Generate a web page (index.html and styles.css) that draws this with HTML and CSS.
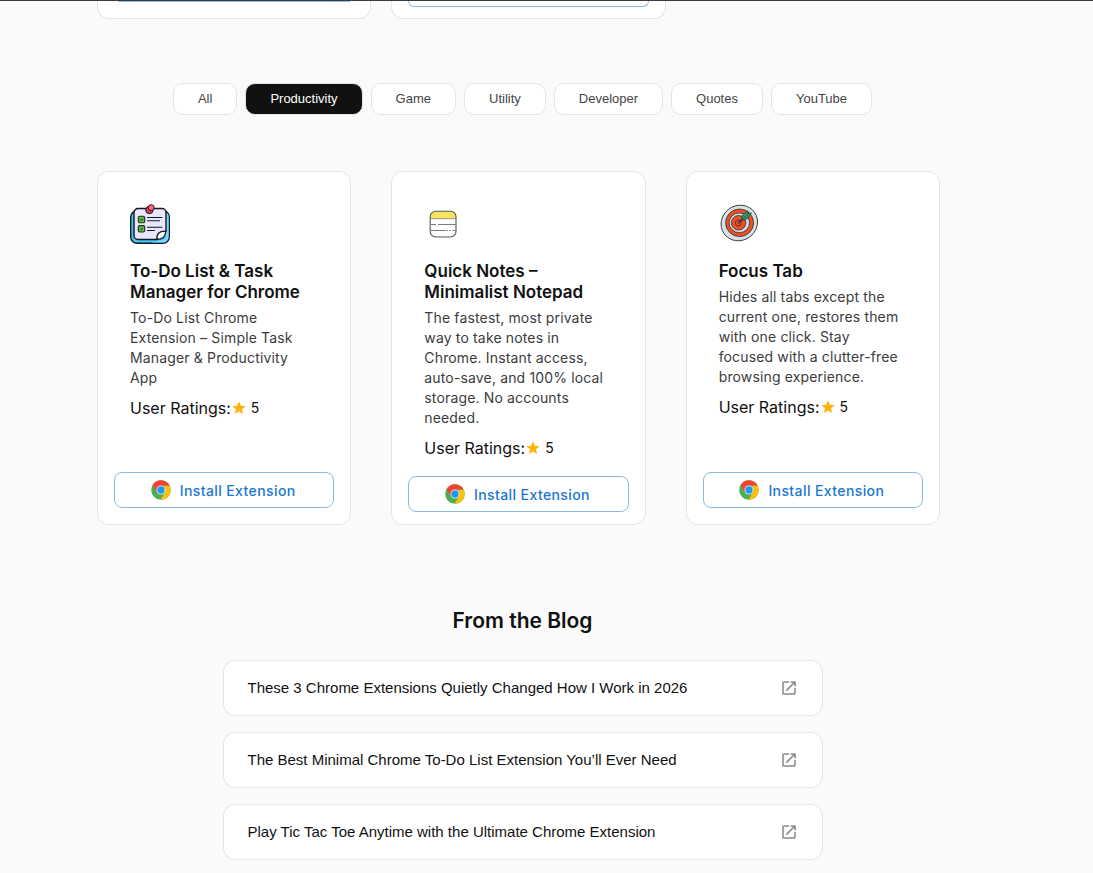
FILE: index.html
```html
<!DOCTYPE html>
<html lang="en">
<head>
<meta charset="utf-8">
<meta name="viewport" content="width=device-width, initial-scale=1">
<title>Chrome Extensions</title>
<link rel="stylesheet" href="styles.css">
</head>
<body>
<svg class="sprite" aria-hidden="true">
  <symbol id="chrome" viewBox="0 0 48 48">
    <circle cx="24" cy="24" r="23.500" fill="#4caf50"/>
    <path d="M44.400 13.400A23.500 23.500 0 0 1 23 47.500l10.500-18L32 13.400z" fill="#ffc107"/>
    <path d="M3.700 12.200A23.500 23.500 0 0 1 44.600 13.400H24L14 29.500z" fill="#f44336"/>
    <circle cx="24" cy="24" r="10.800" fill="#e3f2fd"/>
    <circle cx="24" cy="24" r="8.800" fill="#2196f3"/>
  </symbol>
  <symbol id="star" viewBox="0 0 24 24">
    <path d="M12 17.270 18.180 21l-1.640-7.030L22 9.240l-7.190-.61L12 2 9.190 8.630 2 9.240l5.460 4.730L5.820 21z" fill="#fbb40f"/>
  </symbol>
  <symbol id="open" viewBox="0 0 24 24">
    <path d="M19 19H5V5h7V3H5a2 2 0 0 0-2 2v14a2 2 0 0 0 2 2h14c1.100 0 2-.9 2-2v-7h-2v7zM14 3v2h3.590l-9.830 9.830 1.410 1.410L19 6.410V10h2V3h-7z" fill="currentColor"/>
  </symbol>
</svg>
<main class="page">
  <div class="grid">
    <div class="stub"><div class="stub__edge stub__edge--flat"></div></div>
    <div class="stub"><div class="stub__edge"></div></div>
  </div>

  <nav class="filters" aria-label="Categories">
    <button class="chip" type="button">All</button>
    <button class="chip chip--active" type="button" aria-pressed="true">Productivity</button>
    <button class="chip" type="button">Game</button>
    <button class="chip" type="button">Utility</button>
    <button class="chip" type="button">Developer</button>
    <button class="chip" type="button">Quotes</button>
    <button class="chip" type="button">YouTube</button>
  </nav>

  <section class="grid" aria-label="Extensions">
    <article class="card">
      <div class="card__body">
        <svg class="card__icon" viewBox="0 0 40 40" aria-hidden="true">
          <rect x=".7" y="6.500" width="38.600" height="32.800" rx="6.500" fill="#45c5f5" stroke="#101820" stroke-width="1.400"/>
          <path d="M21 38.600h12a5.600 5.600 0 0 0 5.600-5.600V13a5.600 5.600 0 0 0-3-5V35z" fill="#7cd6ff"/>
          <path d="M8 4.500h24a4 4 0 0 1 4 4V27l-8.500 8.500H8a4 4 0 0 1-4-4v-23a4 4 0 0 1 4-4z" fill="#e9e6fc" stroke="#101820" stroke-width="1.400"/>
          <path d="M27 35.400c-.8-5 2.200-8.600 8.800-8.200-.3 5-3.600 8.200-8.800 8.200z" fill="#fff" stroke="#101820" stroke-width="1.300"/>
          <g fill="#68b83c" stroke="#16301c" stroke-width="1.100"><rect x="8.300" y="12.300" width="6.400" height="6.400" rx="1.400"/><rect x="8.300" y="21.600" width="6.400" height="6.400" rx="1.400"/></g>
          <path d="M10.300 15.500l.9.900 1.700-1.700M10.300 24.900l.9.900 1.700-1.700" fill="none" stroke="#101820" stroke-width=".9"/>
          <path d="M17.500 13.500H32M17.500 16.700H29.500M17.500 23.200H32M17.500 26.500H24.500" fill="none" stroke="#101820" stroke-width="1.100" stroke-linecap="round"/>
          <circle cx="19.400" cy="6" r="3.700" fill="#e13b57" stroke="#101820"/>
          <circle cx="21.200" cy="3.700" r="3" fill="#ff6680" stroke="#32131b"/>
        </svg>
        <h2 class="card__title">To-Do List &amp; Task Manager for Chrome</h2>
        <p class="card__text">To-Do List Chrome Extension – Simple Task Manager &amp; Productivity App</p>
        <p class="rating">User Ratings:<svg class="rating__star" aria-hidden="true"><use href="#star"/></svg><span class="rating__value">5</span></p>
      </div>
      <a class="install" href="#"><svg class="install__logo" aria-hidden="true"><use href="#chrome"/></svg>Install Extension</a>
    </article>

    <article class="card card--tall">
      <div class="card__body">
        <svg class="card__icon" viewBox="0 0 40 40" aria-hidden="true">
          <path d="M6.500 14.500V12.500a5 5 0 0 1 5-5h16a5 5 0 0 1 5 5v2z" fill="#fbe35a"/>
          <rect x="6.200" y="7.200" width="25.800" height="25.800" rx="5.500" fill="none" stroke="#55565f" stroke-width="1.100"/>
          <path d="M6.500 14.600h25.500" stroke="#777" stroke-width="1.100" stroke-dasharray="1.200 .8"/>
          <path d="M6.500 20.500h5.500m2 0h18M6.500 26.500h15m1 0h1.500m1 0h1.500m2 0h3.500" stroke="#7c7d84" stroke-width="1"/>
        </svg>
        <h2 class="card__title">Quick Notes – Minimalist Notepad</h2>
        <p class="card__text">The fastest, most private way to take notes in Chrome. Instant access, auto-save, and 100% local storage. No accounts needed.</p>
        <p class="rating">User Ratings:<svg class="rating__star" aria-hidden="true"><use href="#star"/></svg><span class="rating__value">5</span></p>
      </div>
      <a class="install" href="#"><svg class="install__logo" aria-hidden="true"><use href="#chrome"/></svg>Install Extension</a>
    </article>

    <article class="card">
      <div class="card__body">
        <svg class="card__icon" viewBox="0 0 40 40" aria-hidden="true">
          <g stroke="#3d3b3c" stroke-width=".9">
            <ellipse cx="20.300" cy="19" rx="18.600" ry="17.400" fill="#d5e3e6" transform="rotate(-35 20.300 19)"/>
            <ellipse cx="20.600" cy="18.800" rx="14" ry="13.800" fill="#f04d25"/>
            <ellipse cx="20.300" cy="18.800" rx="10.200" ry="9.900" fill="#d5e3e6"/>
            <circle cx="19.600" cy="18.800" r="7.300" fill="#f04d25"/>
            <circle cx="19.200" cy="19" r="2.900" fill="#f04d25"/>
          </g>
          <path d="M19 19.400l8-8" stroke="#1e2b28" stroke-width="1.200"/>
          <path d="M22.800 16l.4-4.500 5.600-4.700.2 2.800 3.400-.6-4 5.600-5 1.600z" fill="#27a277" stroke="#1d3b31" stroke-width=".8"/>
          <path d="M23 15.800l6.500-6.300" stroke="#1d3b31" stroke-width=".7"/>
        </svg>
        <h2 class="card__title">Focus Tab</h2>
        <p class="card__text">Hides all tabs except the current one, restores them with one click. Stay focused with a clutter-free browsing experience.</p>
        <p class="rating">User Ratings:<svg class="rating__star" aria-hidden="true"><use href="#star"/></svg><span class="rating__value">5</span></p>
      </div>
      <a class="install" href="#"><svg class="install__logo" aria-hidden="true"><use href="#chrome"/></svg>Install Extension</a>
    </article>
  </section>

  <section class="blog">
    <h2 class="blog__title">From the Blog</h2>
    <a class="post" href="#">These 3 Chrome Extensions Quietly Changed How I Work in 2026<svg class="post__icon" aria-hidden="true"><use href="#open"/></svg></a>
    <a class="post" href="#">The Best Minimal Chrome To-Do List Extension You’ll Ever Need<svg class="post__icon" aria-hidden="true"><use href="#open"/></svg></a>
    <a class="post" href="#">Play Tic Tac Toe Anytime with the Ultimate Chrome Extension<svg class="post__icon" aria-hidden="true"><use href="#open"/></svg></a>
  </section>
</main>
</body>
</html>
```
FILE: styles.css
```css
* {
  box-sizing: border-box;
}

body {
  margin: 0;
  border-top: 1px solid #3c3c3e;
  background: #fafafa;
  color: #111;
  font-family: "Liberation Sans", Arial, sans-serif;
}

.sprite {
  display: none;
}

.page {
  padding: 0 48px 12px 0;
}

.grid {
  display: grid;
  grid-template-columns: repeat(3, 1fr);
  gap: 20px;
  margin: 0 85px 0 97px;
}

/* Lower edges of the row that is scrolled away. */
.stub {
  height: 18px;
  padding: 0 16px;
  border: 1px solid #e5e5e5;
  border-top: 0;
  border-radius: 0 0 12px 12px;
  background: #fff;
}

.stub__edge {
  height: 6px;
  border: 1px solid #8cbae8;
  border-top: 0;
  border-radius: 0 0 8px 8px;
}

.stub__edge--flat {
  height: 1px;
  margin: 0 4px;
  border-width: 0 0 1px;
  border-radius: 0;
}

.card {
  display: flex;
  flex-direction: column;
  justify-content: space-between;
  margin-right: 20px;
  padding: 16px;
  border: 1px solid #e5e5e5;
  border-radius: 12px;
  background: #fff;
}

.card--tall {
  padding-bottom: 12px;
}

.card__body {
  padding: 16px 16px 18px;
  font-family: Inter, sans-serif;
}

.card__icon {
  display: block;
  width: 40px;
  height: 40px;
}

.card__title {
  margin: 17px 0 5px;
  font-size: 17px;
  font-weight: 600;
  line-height: 21px;
}

.card__text {
  margin: 0 0 10px;
  color: #3c3c3c;
  font-size: 14px;
  letter-spacing: 0.01071em;
  line-height: 20px;
}

.rating {
  display: flex;
  align-items: center;
  margin: 0;
  font-size: 16px;
  line-height: 20px;
}

.rating__star {
  width: 16px;
  height: 16px;
}

.rating__value {
  margin-left: 4px;
  font-size: 14px;
}

.install {
  display: flex;
  flex-shrink: 0;
  align-items: center;
  justify-content: center;
  gap: 9px;
  height: 36px;
  padding-right: 2px;
  border: 1px solid #8cbae8;
  border-radius: 8px;
  color: #1976d2;
  font-family: Inter, sans-serif;
  font-size: 14px;
  font-weight: 500;
  letter-spacing: 0.02857em;
  text-decoration: none;
}

.install__logo {
  width: 20px;
  height: 20px;
}

.filters {
  display: flex;
  flex-wrap: wrap;
  justify-content: center;
  gap: 8px;
  margin: 64px 0 56px;
}

.chip {
  height: 32px;
  padding: 0 24px 2px;
  border: 1px solid #e5e5e5;
  border-radius: 10px;
  background: #fff;
  color: #444;
  font-family: inherit;
  font-size: 13px;
}

.chip--active {
  background: #111;
  color: #fff;
}

.blog {
  display: flex;
  flex-direction: column;
  gap: 16px;
  max-width: 600px;
  margin: 81px auto 0;
}

.blog__title {
  margin: 0 0 8px;
  font-family: Inter, sans-serif;
  font-size: 21px;
  font-weight: 600;
  line-height: 30px;
  text-align: center;
}

.post {
  display: flex;
  align-items: center;
  justify-content: space-between;
  gap: 16px;
  padding: 18px 24px;
  border: 1px solid #e5e5e5;
  border-radius: 12px;
  background: #fff;
  color: #111;
  font-size: 15px;
  line-height: 18px;
  text-decoration: none;
}

.post__icon {
  width: 18px;
  height: 18px;
  color: #888;
}
```
